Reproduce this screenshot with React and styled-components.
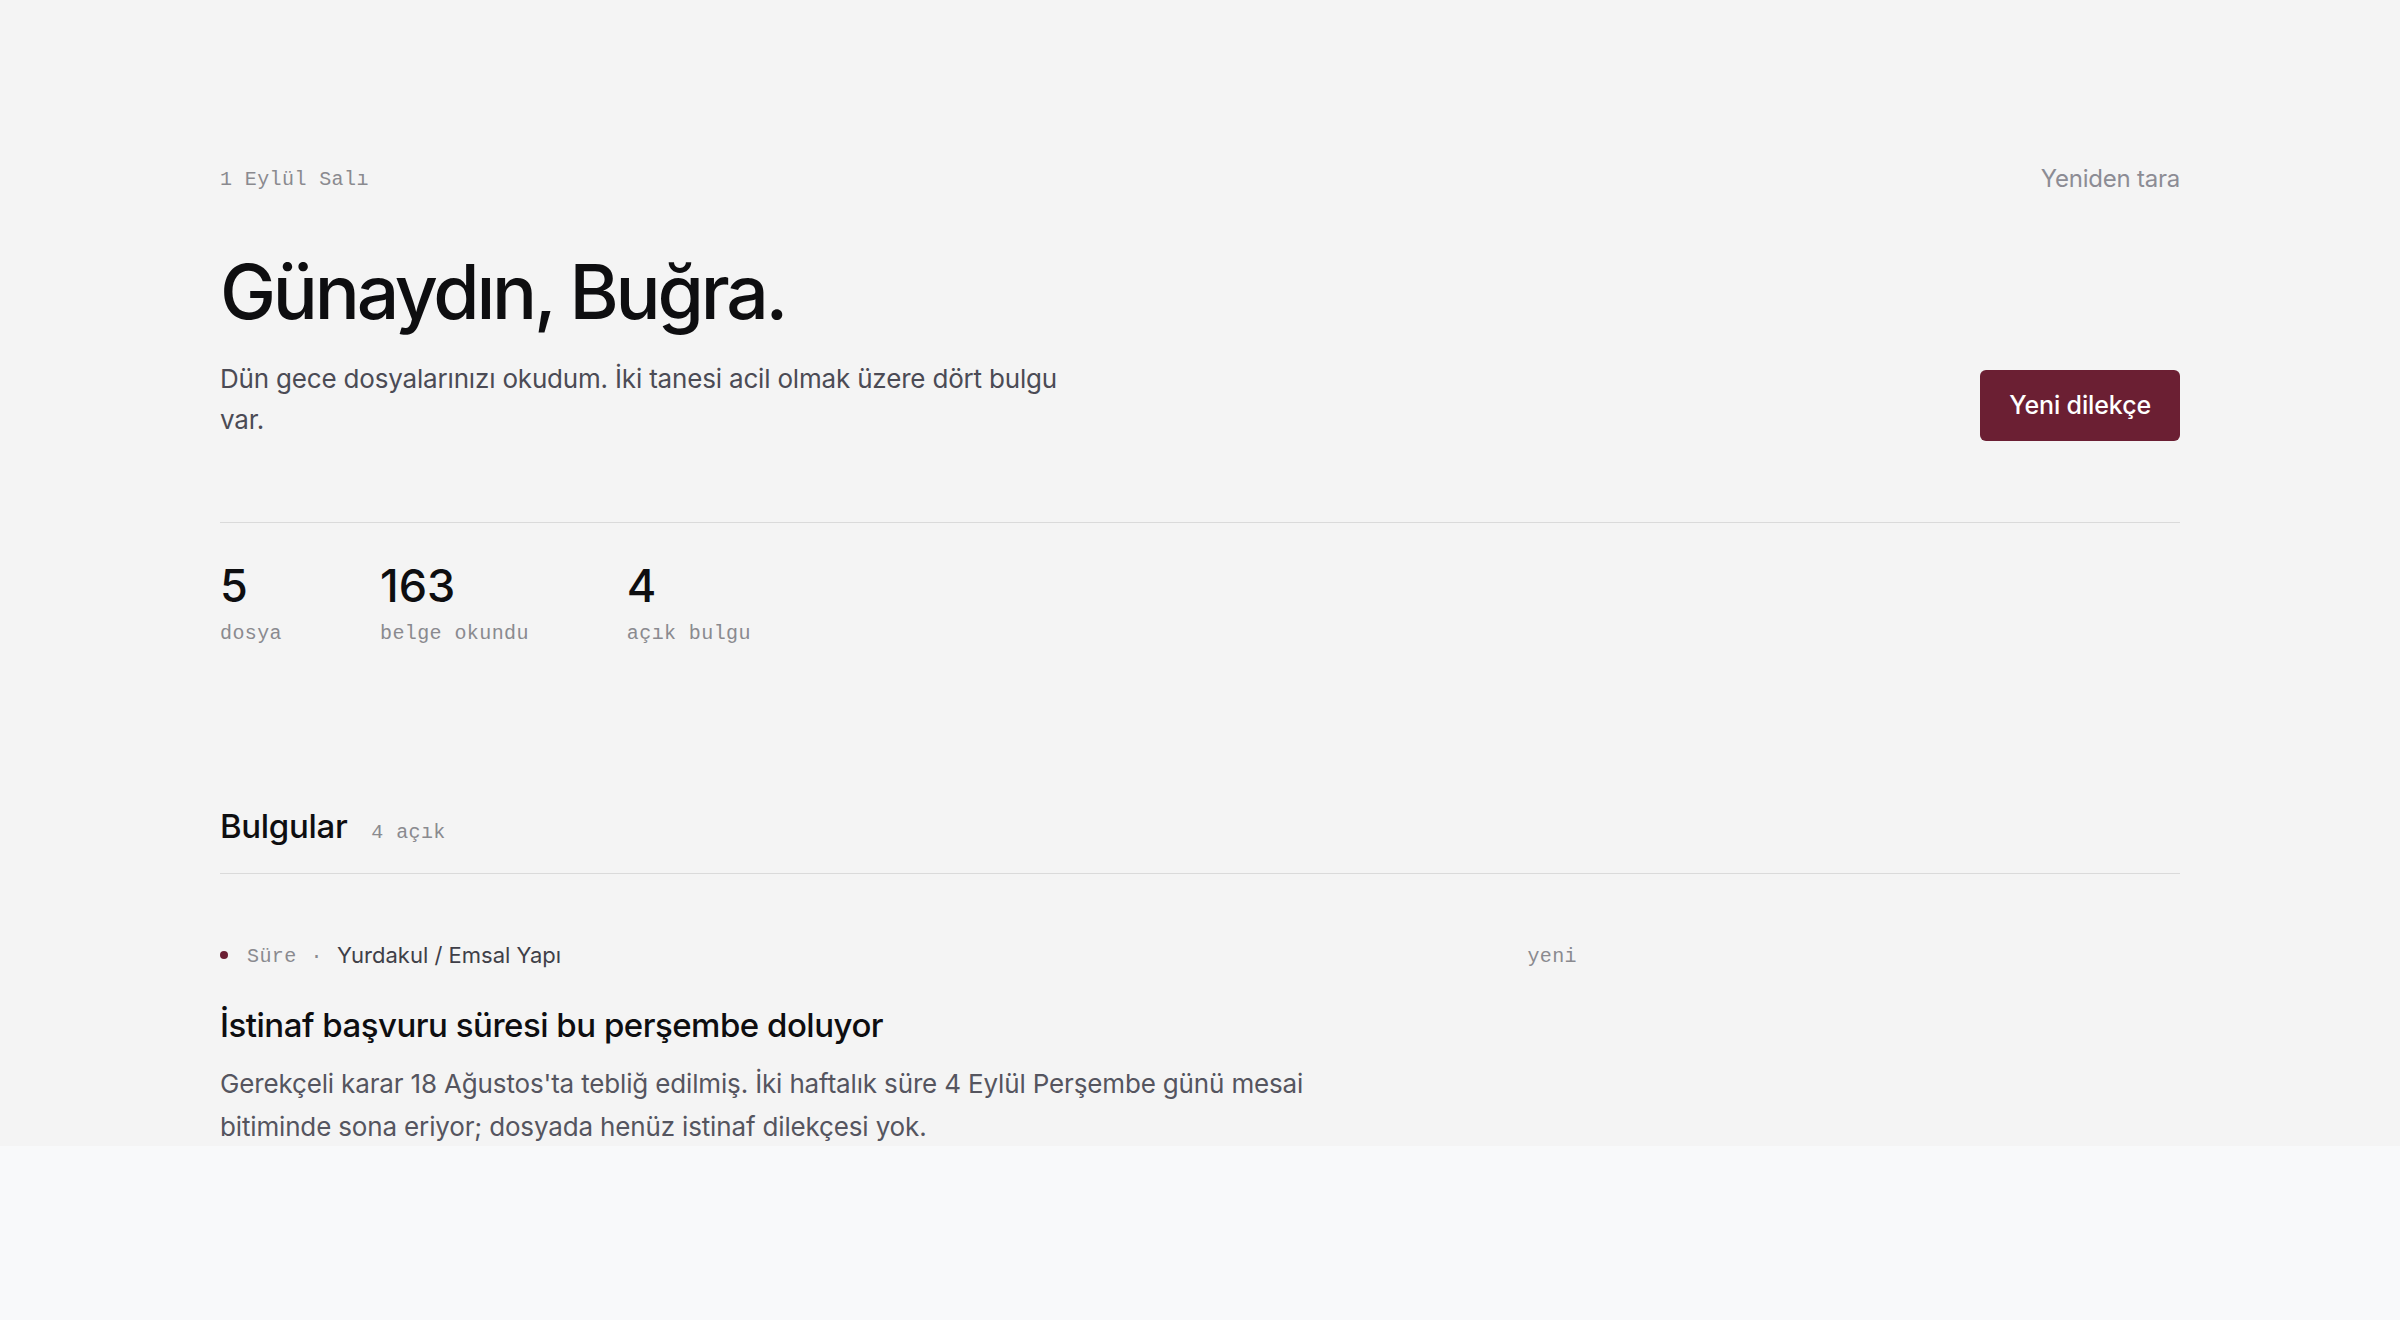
import React from "react";
import styled, { createGlobalStyle } from "styled-components";

const Global = createGlobalStyle`
  html, body { margin: 0; padding: 0; background: #f8f9fa; }
  * { box-sizing: border-box; }
  body { font-family: Inter, "Noto Sans", sans-serif; -webkit-font-smoothing: antialiased; }
`;

const Screen = styled.main`
  height: 1146px;
  overflow: hidden;
  background: #f4f4f4;
  padding: 164px 220px 0;
`;

const TopBar = styled.div`
  display: flex;
  align-items: center;
  justify-content: space-between;
  height: 28px;
`;

const Mono = styled.span`
  font-family: "Liberation Mono", "DejaVu Sans Mono", monospace;
  font-size: 20px;
  letter-spacing: 0.02em;
  color: #8a8a8f;
  line-height: 28px;
  padding-top: ${(p) => (p.$nudge ? "3px" : "0")};
`;

const GhostButton = styled.button`
  border: 0;
  background: none;
  padding: 0;
  font-family: Inter, sans-serif;
  font-size: 24px;
  letter-spacing: -0.01em;
  color: #8c8c94;
  cursor: pointer;
`;

const Hero = styled.section`
  display: flex;
  align-items: flex-end;
  justify-content: space-between;
  padding-top: 59px;
  padding-bottom: 81px;
  border-bottom: 1px solid #dadada;
`;

const HeroText = styled.div`
  display: flex;
  flex-direction: column;
  gap: 24px;
`;

const Heading = styled.h1`
  margin: 0;
  font-family: Inter, sans-serif;
  font-weight: 500;
  font-size: 75px;
  line-height: 1.1;
  letter-spacing: -0.043em;
  color: #0e0e10;
`;

const Lead = styled.p`
  margin: 0;
  max-width: 860px;
  font-size: 26px;
  line-height: 1.6;
  letter-spacing: -0.007em;
  color: #4b4b55;
`;

const PrimaryButton = styled.button`
  height: 71px;
  padding: 0 29px;
  border: 0;
  border-radius: 6px;
  background: #6b1f33;
  color: #ffffff;
  font-family: Inter, sans-serif;
  font-size: 25px;
  font-weight: 500;
  letter-spacing: -0.005em;
  cursor: pointer;
`;

const Stats = styled.section`
  display: flex;
  gap: 98px;
  padding-top: 38px;
`;

const Stat = styled.div`
  display: flex;
  flex-direction: column;
  gap: 10px;
`;

const StatValue = styled.div`
  font-family: Inter, sans-serif;
  font-size: 45px;
  font-weight: 500;
  line-height: 1.1;
  color: #0e0e10;
`;

const SectionHead = styled.div`
  display: flex;
  align-items: baseline;
  gap: 24px;
  margin-top: 159px;
  padding-bottom: 26px;
  border-bottom: 1px solid #dadada;
`;

const SectionTitle = styled.h2`
  margin: 0;
  font-size: 33px;
  font-weight: 500;
  line-height: 1.2;
  letter-spacing: -0.01em;
  color: #0e0e10;
`;

const Finding = styled.article`
  max-width: 1357px;
  padding-top: 66px;
`;

const MetaRow = styled.div`
  display: flex;
  align-items: center;
  justify-content: space-between;
  height: 30px;
`;

const MetaLeft = styled.div`
  display: flex;
  align-items: center;
  gap: 14px;
`;

const Dot = styled.span`
  width: 8px;
  height: 8px;
  border-radius: 50%;
  background: #6b1f33;
  margin-right: 5px;
`;

const CaseName = styled.span`
  font-size: 22px;
  color: #3f3f48;
`;

const FindingTitle = styled.h3`
  margin: 34px 0 0;
  font-size: 33px;
  font-weight: 500;
  line-height: 1.3;
  letter-spacing: -0.015em;
  color: #0e0e10;
`;

const FindingBody = styled.p`
  margin: 15px 0 0;
  max-width: 1100px;
  font-size: 26px;
  line-height: 43px;
  letter-spacing: -0.006em;
  color: #55555f;
`;

const stats = [
  { value: "5", label: "dosya" },
  { value: "163", label: "belge okundu" },
  { value: "4", label: "açık bulgu" },
];

export default function App() {
  return (
    <>
      <Global />
      <Screen>
        <TopBar>
          <Mono $nudge>1 Eylül Salı</Mono>
          <GhostButton>Yeniden tara</GhostButton>
        </TopBar>
        <Hero>
          <HeroText>
            <Heading>Günaydın, Buğra.</Heading>
            <Lead>
              Dün gece dosyalarınızı okudum. İki tanesi acil olmak üzere dört bulgu var.
            </Lead>
          </HeroText>
          <PrimaryButton>Yeni dilekçe</PrimaryButton>
        </Hero>
        <Stats>
          {stats.map((s) => (
            <Stat key={s.label}>
              <StatValue>{s.value}</StatValue>
              <Mono>{s.label}</Mono>
            </Stat>
          ))}
        </Stats>
        <SectionHead>
          <SectionTitle>Bulgular</SectionTitle>
          <Mono>4 açık</Mono>
        </SectionHead>
        <Finding>
          <MetaRow>
            <MetaLeft>
              <Dot />
              <Mono $nudge>Süre</Mono>
              <Mono $nudge>·</Mono>
              <CaseName>Yurdakul / Emsal Yapı</CaseName>
            </MetaLeft>
            <Mono $nudge>yeni</Mono>
          </MetaRow>
          <FindingTitle>İstinaf başvuru süresi bu perşembe doluyor</FindingTitle>
          <FindingBody>
            Gerekçeli karar 18 Ağustos'ta tebliğ edilmiş. İki haftalık süre 4 Eylül Perşembe günü mesai bitiminde sona eriyor; dosyada henüz istinaf dilekçesi yok.
          </FindingBody>
        </Finding>
      </Screen>
    </>
  );
}
